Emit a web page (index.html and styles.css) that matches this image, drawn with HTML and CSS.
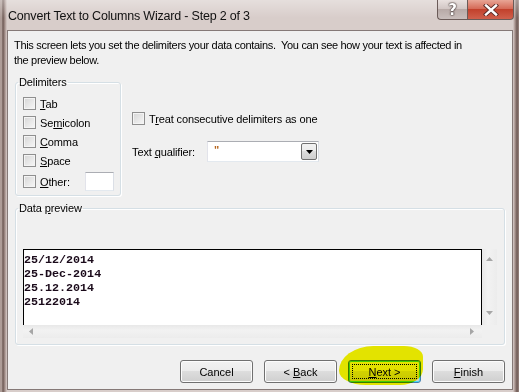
FILE: index.html
```html
<!DOCTYPE html>
<html lang="en">
<head>
  <meta charset="UTF-8">
  <meta name="viewport" content="width=device-width, initial-scale=1.0">
  <link rel="stylesheet" href="styles.css">
</head>
<body>
  <div class="window">
    <div class="titlebar">
      <span class="title">Convert Text to Columns Wizard - Step 2 of 3</span>
      <div class="caption-buttons">
        <span class="cap-btn help">?</span>
        <span class="cap-btn close">
          <svg width="16" height="12" viewBox="0 0 16 12">
            <path d="M3 1.5 L13 10.5 M13 1.5 L3 10.5" stroke="#5a2a26" stroke-width="4.2" stroke-linecap="square"/>
            <path d="M3 1.5 L13 10.5 M13 1.5 L3 10.5" stroke="#fff" stroke-width="2.4" stroke-linecap="square"/>
          </svg>
        </span>
      </div>
    </div>

    <div class="client">
      <p class="intro">This screen lets you set the delimiters your data contains.&nbsp; You can see how your text is affected in<br>the preview below.</p>

      <div class="options">
        <fieldset class="group delimiters">
          <legend>Delimiters</legend>
          <label class="check"><span class="box"></span><span><u>T</u>ab</span></label>
          <label class="check"><span class="box"></span><span>Se<u>m</u>icolon</span></label>
          <label class="check"><span class="box"></span><span><u>C</u>omma</span></label>
          <label class="check"><span class="box"></span><span><u>S</u>pace</span></label>
          <label class="check other"><span class="box"></span><span><u>O</u>ther:</span><span class="textbox"></span></label>
        </fieldset>

        <div class="side">
          <label class="check"><span class="box"></span><span>T<u>r</u>eat consecutive delimiters as one</span></label>
          <div class="qualifier">
            <span>Text <u>q</u>ualifier:</span>
            <div class="combo">
              <span class="combo-value">"</span>
              <span class="combo-btn">
                <svg width="7" height="4" viewBox="0 0 7 4"><path d="M0 0 H7 L3.5 4 Z" fill="#000"/></svg>
              </span>
            </div>
          </div>
        </div>
      </div>

      <fieldset class="group preview">
        <legend>Data <u>p</u>review</legend>
        <div class="preview-box">
          <pre class="preview-text">25/12/2014
25-Dec-2014
25.12.2014
25122014</pre>
          <div class="vscroll">
            <svg width="7" height="4" viewBox="0 0 7 4"><path d="M0 4 H7 L3.5 0 Z" fill="#a6a6a6"/></svg>
            <svg width="7" height="4" viewBox="0 0 7 4"><path d="M0 0 H7 L3.5 4 Z" fill="#a6a6a6"/></svg>
          </div>
          <div class="hscroll">
            <svg width="4" height="7" viewBox="0 0 4 7"><path d="M4 0 V7 L0 3.5 Z" fill="#a6a6a6"/></svg>
            <svg width="4" height="7" viewBox="0 0 4 7"><path d="M0 0 V7 L4 3.5 Z" fill="#a6a6a6"/></svg>
          </div>
          <div class="corner"></div>
        </div>
      </fieldset>

      <div class="buttons">
        <button class="btn">Cancel</button>
        <button class="btn">&lt; <u>B</u>ack</button>
        <button class="btn default"><span class="focus"><u>N</u>ext &gt;</span></button>
        <button class="btn"><u>F</u>inish</button>
        <span class="marker"></span>
      </div>
    </div>
  </div>
</body>
</html>
```

FILE: styles.css
```css
* {
  box-sizing: border-box;
}

body {
  margin: 0;
  font-family: "Liberation Sans", Arial, sans-serif;
  font-size: 11px;
  letter-spacing: -0.12px;
  color: #000;
}

.window {
  width: 519px;
  height: 392px;
  display: flex;
  flex-direction: column;
  background: linear-gradient(90deg, #9a8782 0, #c2b2ad 1px, #6e5a55 3px, #a8948f 5px, #d8cdca 7px, #d8cdca calc(100% - 6px), #a8948f calc(100% - 4px), #6e5a55 calc(100% - 2px), #9a8782 100%);
}

.titlebar {
  height: 30px;
  flex-shrink: 0;
  display: flex;
  justify-content: space-between;
  align-items: flex-start;
  background: linear-gradient(180deg, rgba(255, 255, 255, 0.35), rgba(255, 255, 255, 0) 60%);
}

.title {
  margin: 8px 0 0 8px;
  font-size: 12.5px;
  letter-spacing: -0.2px;
  line-height: 16px;
  color: #111;
}

.caption-buttons {
  display: flex;
  margin-right: 5px;
}

.cap-btn {
  height: 20px;
  display: flex;
  align-items: center;
  justify-content: center;
  border: 1px solid #6b5b58;
  border-top: none;
}

.help {
  width: 30px;
  border-right: none;
  border-radius: 0 0 0 4px;
  background: linear-gradient(180deg, #e9e1df 0, #d2c7c5 45%, #b8aaa7 50%, #c9bebc 100%);
  font: bold 15px "DejaVu Sans", sans-serif;
  color: #fff;
  text-shadow: 0 0 1px #3a2c2a, 0 0 1px #3a2c2a, 0 0 2px #3a2c2a;
}

.close {
  width: 47px;
  border-radius: 0 0 4px 0;
  background: linear-gradient(180deg, #e8a595 0, #d56b58 45%, #c2412c 50%, #d0604c 100%);
}

.client {
  flex: 1;
  margin: 0 6px 2px 7px;
  padding: 0 7px;
  background: #f0f0f0;
  border: 1px solid #857977;
  display: flex;
  flex-direction: column;
}

.intro {
  margin: 7px 0 0 -1px;
  line-height: 15px;
  letter-spacing: -0.31px;
  white-space: nowrap;
}

.options {
  display: flex;
  gap: 11px;
  margin-top: 7px;
}

.group {
  margin: 0;
  padding: 0 6px 4px 7px;
  border: 1px solid #d5dfe5;
  border-radius: 3px;
  box-shadow: inset 1px 1px #fff, 1px 1px #fff;
  min-width: 0;
}

.group legend {
  padding: 0 1px;
  margin-left: -5px;
  line-height: 15px;
}

.delimiters {
  width: 106px;
  padding-top: 4px;
}

.check {
  display: flex;
  align-items: center;
  gap: 4px;
  height: 19px;
  white-space: nowrap;
}

.box {
  width: 13px;
  height: 13px;
  flex-shrink: 0;
  border: 1px solid #8f8f8f;
  background: linear-gradient(135deg, #d6d6d6, #f7f7f7);
  box-shadow: inset 0 0 0 1px #f4f4f4;
}

.other {
  margin-top: 2px;
}

.textbox {
  margin-left: auto;
  width: 29px;
  height: 19px;
  background: #fff;
  border: 1px solid #abadb3;
  border-color: #abadb3 #dbdfe6 #e3e9ef #e2e3ea;
}

.side {
  padding-top: 34px;
  display: flex;
  flex-direction: column;
}

.qualifier {
  display: flex;
  align-items: center;
  gap: 12px;
  margin-top: 13px;
}

.combo {
  width: 112px;
  height: 21px;
  display: flex;
  align-items: stretch;
  justify-content: space-between;
  background: #fff;
  border: 1px solid #abadb3;
  border-color: #abadb3 #dbdfe6 #e3e9ef #e2e3ea;
  padding: 1px;
}

.combo-value {
  color: #b5651d;
  font-weight: bold;
  padding-left: 5px;
  line-height: 14px;
}

.combo-btn {
  width: 16px;
  display: flex;
  align-items: center;
  justify-content: center;
  border: 1px solid #707070;
  border-radius: 2px;
  background: linear-gradient(180deg, #f2f2f2 0, #ebebeb 50%, #dddddd 50%, #cfcfcf 100%);
}

.preview {
  margin-top: 5px;
  padding-bottom: 6px;
}

.preview-box {
  margin-top: 33px;
  display: grid;
  grid-template-columns: 459px 15px;
  grid-template-rows: 76px 13px;
}

.preview-text {
  margin: 0;
  padding: 3px 0 0 0;
  background: #fff;
  border: 1px solid #000;
  border-bottom: none;
  font: bold 11.7px/14px "Liberation Mono", "Courier New", monospace;
  letter-spacing: 0;
  color: #1a0a1a;
  overflow: hidden;
}

.vscroll {
  display: flex;
  flex-direction: column;
  justify-content: space-between;
  align-items: center;
  padding: 8px 0 10px 0;
  background: linear-gradient(90deg, #e8e8e8, #f2f2f2 40%, #ececec);
}

.hscroll {
  display: flex;
  justify-content: space-between;
  align-items: center;
  padding: 0 8px 0 6px;
  background: linear-gradient(180deg, #e8e8e8, #f2f2f2 40%, #ececec);
}

.corner {
  background: #f0f0f0;
}

.buttons {
  position: relative;
  display: flex;
  justify-content: flex-end;
  gap: 11px;
  margin-top: 15px;
}

.btn {
  width: 73px;
  height: 23px;
  padding: 0;
  font: 11px "Liberation Sans", Arial, sans-serif;
  color: #000;
  border: 1px solid #707070;
  border-radius: 3px;
  background: linear-gradient(180deg, #f2f2f2 0, #ebebeb 50%, #dddddd 50%, #cfcfcf 100%);
  box-shadow: inset 0 0 0 1px #fcfcfc;
}

.default {
  border-color: #3c7fb1;
  box-shadow: inset 0 0 0 1px #48d8fb;
  padding: 3px;
}

.focus {
  display: flex;
  align-items: center;
  justify-content: center;
  height: 100%;
  border: 1px dotted #000;
}

/* yellow highlighter stroke over the Next button */
.marker {
  position: absolute;
  left: 324px;
  top: -14px;
  width: 84px;
  height: 39px;
  background: #f2f200;
  mix-blend-mode: multiply;
  border-radius: 45% 25% 30% 35% / 70% 30% 45% 40%;
  pointer-events: none;
}
```
